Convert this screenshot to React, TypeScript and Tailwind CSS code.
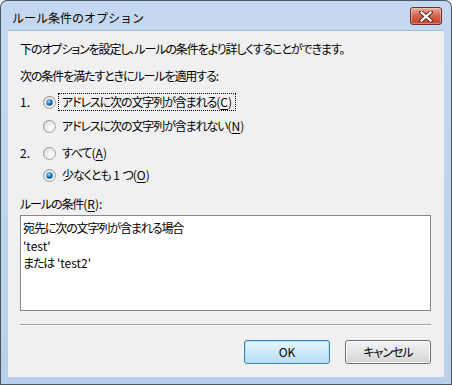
import React from 'react';

const font = "font-['Noto_Sans_CJK_JP',sans-serif] [font-feature-settings:'palt']";

function Radio({ checked }: { checked?: boolean }) {
  return (
    <svg width="13" height="13" viewBox="0 0 13 13" className="shrink-0">
      <defs>
        <linearGradient id="ring" x1="0" y1="0" x2="1" y2="1">
          <stop offset="0" stopColor="#8c8c8c" />
          <stop offset="1" stopColor="#a9a9a9" />
        </linearGradient>
        <radialGradient id="inner" cx="0.6" cy="0.6" r="0.7">
          <stop offset="0" stopColor="#ffffff" />
          <stop offset="1" stopColor="#d4d4d4" />
        </radialGradient>
        <radialGradient id="dot" cx="0.4" cy="0.35" r="0.65">
          <stop offset="0" stopColor="#a9d9f8" />
          <stop offset="0.5" stopColor="#2a8ad4" />
          <stop offset="1" stopColor="#0b3f78" />
        </radialGradient>
      </defs>
      <circle cx="6.5" cy="6.5" r="6" fill="url(#inner)" stroke="url(#ring)" strokeWidth="1" />
      <circle cx="6.5" cy="6.5" r="4.3" fill="none" stroke="#f4f4f4" strokeWidth="0.8" />
      {checked && <circle cx="6.5" cy="6.5" r="3.2" fill="url(#dot)" />}
    </svg>
  );
}

// accelerator key, e.g. (C) with underlined letter
function Acc({ k }: { k: string }) {
  return (
    <span className="tracking-normal">
      (<span className="underline underline-offset-2">{k}</span>)
    </span>
  );
}

const L = ({ children }: { children: React.ReactNode }) => (
  <span className="tracking-normal whitespace-pre">{children}</span>
);

export default function App() {
  return (
    <div className={`w-[452px] h-[385px] bg-[#4a5563] p-px rounded-t-[7px] text-[12px] text-black ${font}`}>
      <div className="flex h-full flex-col rounded-t-[6px] bg-gradient-to-b from-[#c4d9f1] to-[#b9d1ea] px-[7px] pb-[7px]">
        <div className="flex h-[29px] items-center justify-between pl-[4px] pr-[2px]">
          <span className="text-[12px] [font-feature-settings:normal] pt-[5px]">ルール条件のオプション</span>
          <div className="mt-[1px] flex h-[18px] w-[32px] items-center justify-center rounded-[3px] border border-[#6e2b22] bg-gradient-to-b from-[#e9ab99] via-[#d3634e] to-[#c1402c] shadow-[inset_0_0_0_1px_rgba(255,255,255,0.35)]">
            <svg width="14" height="11" viewBox="0 0 14 11">
              <path d="M2 1 L12 10 M12 1 L2 10" stroke="#5a2a22" strokeWidth="4" strokeLinecap="square" />
              <path d="M2.5 1.5 L11.5 9.5 M11.5 1.5 L2.5 9.5" stroke="#ffffff" strokeWidth="2.2" strokeLinecap="square" />
            </svg>
          </div>
        </div>
        <div className="flex flex-1 flex-col border-t border-[#a7bdd6] bg-[#f0f0f0] pl-[12px] tracking-[-1.1px]">
          <div className="mt-[9px] h-[18px] leading-[18px]">下のオプションを設定し、ルールの条件をより詳しくすることができます。</div>
          <div className="mt-[9px] h-[18px] leading-[18px]">次の条件を満たすときにルールを適用する:</div>
          <div className="mt-[8px] flex h-[18px] items-center">
            <span className="w-[23px] tracking-normal">1.</span>
            <Radio checked />
            <span className="ml-[2px] border border-dotted border-black px-[3px] leading-[16px]">
              アドレスに次の文字列が含まれる<Acc k="C" />
            </span>
          </div>
          <div className="mt-[6px] flex h-[18px] items-center pl-[23px]">
            <Radio />
            <span className="ml-[6px] leading-[16px]">
              アドレスに次の文字列が含まれない<Acc k="N" />
            </span>
          </div>
          <div className="mt-[9px] flex h-[18px] items-center">
            <span className="w-[23px] tracking-normal">2.</span>
            <Radio />
            <span className="ml-[6px] leading-[16px]">
              すべて<Acc k="A" />
            </span>
          </div>
          <div className="mt-[4px] flex h-[18px] items-center pl-[23px]">
            <Radio checked />
            <span className="ml-[6px] leading-[16px]">
              少なくとも<L> 1 </L>つ<Acc k="O" />
            </span>
          </div>
          <div className="mt-[11px] h-[18px] leading-[18px]">
            ルールの条件<Acc k="R" />:
          </div>
          <div className="mt-[2px] h-[96px] w-[411px] border border-[#828790] bg-white pl-[2px] pt-[3px] leading-[17.5px]">
            <div>宛先に次の文字列が含まれる場合</div>
            <div><L>'test'</L></div>
            <div>または<L> 'test2'</L></div>
          </div>
          <div className="mt-[13px] w-[411px] border-t border-[#a0a0a0] border-b border-b-white" />
          <div className="mt-[14px] flex w-[411px] justify-end gap-[15px] tracking-normal">
            <button className="h-[24px] w-[86px] rounded-[3px] border border-[#3c7fb1] bg-gradient-to-b from-[#e5f4fc] via-[#cfeafb] to-[#b5dcf5] shadow-[inset_0_0_0_1px_#aee3fb] text-[12px]">
              OK
            </button>
            <button className="h-[24px] w-[86px] rounded-[3px] border border-[#707070] bg-gradient-to-b from-[#f4f4f4] via-[#e6e6e6] to-[#d3d3d3] shadow-[inset_0_0_0_1px_#fcfcfc] text-[12px] tracking-[-1px]">
              キャンセル
            </button>
          </div>
        </div>
      </div>
    </div>
  );
}
